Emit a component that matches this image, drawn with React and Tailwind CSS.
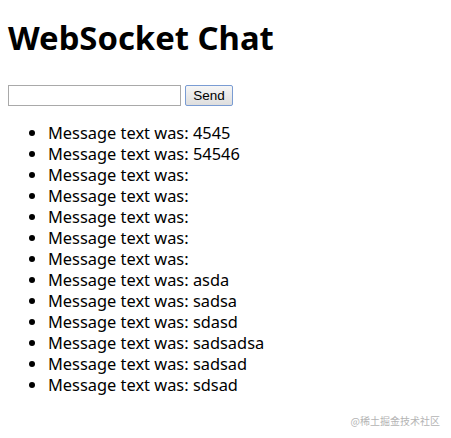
import { useState } from 'react';

const messages = [
  '4545',
  '54546',
  '',
  '',
  '',
  '',
  '',
  'asda',
  'sadsa',
  'sdasd',
  'sadsadsa',
  'sadsad',
  'sdsad',
];

export default function App() {
  const [text, setText] = useState('');

  return (
    <div className="relative w-[451px] h-[438px] bg-white text-black font-['Noto_Sans','Noto_Sans_CJK_SC',sans-serif] overflow-hidden">
      <div className="px-2 pt-[18px]">
        <h1 className="text-[32.8px] leading-[40px] font-bold">WebSocket Chat</h1>

        <form className="flex items-center gap-[4px] mt-[27px]" onSubmit={(e) => e.preventDefault()}>
          <input
            value={text}
            onChange={(e) => setText(e.target.value)}
            className="w-[173px] h-[21px] border border-[#a9a9a9] bg-white outline-none px-1 text-[13px]"
          />
          <button
            type="submit"
            className="w-[48px] h-[21px] border border-[#7a9cd3] rounded-[2px] bg-gradient-to-b from-[#f6f6f6] to-[#dedede] text-[13.5px] leading-none font-['Liberation_Sans',Arial,sans-serif] text-black"
          >
            Send
          </button>
        </form>

        {/* message log */}
        <ul className="list-disc pl-10 mt-[16px] text-[16.4px] leading-[21px]">
          {messages.map((m, idx) => (
            <li key={idx}>Message text was: {m}</li>
          ))}
        </ul>
      </div>

      <div className="absolute right-[11px] top-[413px] text-[10px] text-[#b4b4b4] font-['Noto_Sans_CJK_SC',sans-serif]">
        @稀土掘金技术社区
      </div>
    </div>
  );
}
